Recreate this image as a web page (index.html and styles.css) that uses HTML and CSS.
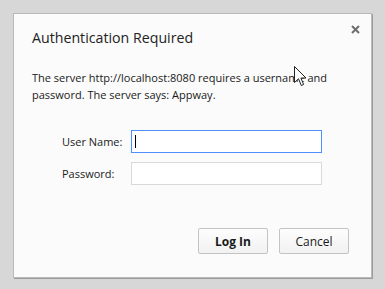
FILE: index.html
```html
<!DOCTYPE html>
<html lang="en">

<head>
    <meta charset="UTF-8">
    <meta name="viewport" content="width=device-width, initial-scale=1.0">
    <title>Authentication Required</title>
    <link rel="stylesheet" href="styles.css">
</head>

<body>
    <div class="dialog">
        <button class="close" type="button" aria-label="Close">
            <svg width="9" height="9" viewBox="0 0 9 9">
                <path d="M1 1 L8 8 M8 1 L1 8" stroke="#6e6e6e" stroke-width="2" />
            </svg>
        </button>

        <h1 class="title">Authentication Required</h1>

        <p class="message">The server http://localhost:8080 requires a username and password. The server says: Appway.</p>

        <form class="fields">
            <div class="row">
                <label for="username">User Name:</label>
                <div class="field">
                    <input type="text" id="username" class="focused">
                    <span class="caret"></span>
                </div>
            </div>
            <div class="row">
                <label for="password">Password:</label>
                <div class="field">
                    <input type="password" id="password">
                </div>
            </div>
        </form>

        <div class="buttons">
            <button type="button" class="btn primary">Log In</button>
            <button type="button" class="btn">Cancel</button>
        </div>
    </div>

    <svg class="pointer" width="13" height="21" viewBox="0 0 13 21">
        <path d="M0.5 0.5 L0.5 16.5 L4.5 12.8 L7.3 19.5 L9.6 18.5 L6.9 12 L12 12 Z" fill="#fff" stroke="#222" stroke-width="1" />
    </svg>
</body>

</html>
```

FILE: styles.css
```css
body {
    margin: 0;
    padding: 13px;
    background: #d7d7d7;
    font-family: "Open Sans", "Noto Sans", sans-serif;
    color: #1a1a1a;
}

.dialog {
    position: relative;
    box-sizing: border-box;
    width: 359px;
    height: 265px;
    padding: 14px 18px 0 18px;
    background: #fbfbfb;
    border: 1px solid #b9b9b9;
    box-shadow: 1px 1px 0 #9c9c9c;
    display: flex;
    flex-direction: column;
}

.close {
    position: absolute;
    top: 9px;
    right: 9px;
    width: 13px;
    height: 13px;
    padding: 0;
    border: 0;
    background: none;
    display: flex;
    align-items: center;
    justify-content: center;
}

.title {
    margin: 0;
    font-size: 14.2px;
    font-weight: normal;
    line-height: 20px;
    color: #222;
}

.message {
    margin: 21px 0 0 0;
    width: 310px;
    font-size: 11px;
    line-height: 17px;
}

.fields {
    margin: 27px 0 0 30px;
    display: flex;
    flex-direction: column;
    gap: 9px;
}

.row {
    display: flex;
    align-items: center;
}

label {
    width: 69px;
    font-size: 11px;
}

.field {
    position: relative;
    display: flex;
}

input[type="text"],
input[type="password"] {
    box-sizing: border-box;
    width: 191px;
    height: 23px;
    margin: 0;
    padding: 2px 4px;
    border: 1px solid #d9d9d9;
    background: #fff;
    outline: none;
    font-size: 12px;
}

input.focused {
    border-color: #4d90fe;
}

.caret {
    position: absolute;
    left: 4px;
    top: 5px;
    width: 1px;
    height: 13px;
    background: #000;
}

.buttons {
    margin-top: auto;
    margin-bottom: 23px;
    display: flex;
    justify-content: flex-end;
    gap: 11px;
    padding-right: 4px;
}

.btn {
    box-sizing: border-box;
    width: 70px;
    height: 26px;
    border: 1px solid #c3c3c3;
    border-radius: 2px;
    background: linear-gradient(#fdfdfd, #f1f1f1);
    font-family: "Open Sans", "Noto Sans", sans-serif;
    font-size: 12px;
    color: #1a1a1a;
}

.btn.primary {
    font-weight: bold;
}

.pointer {
    position: absolute;
    left: 294px;
    top: 66px;
}
```
